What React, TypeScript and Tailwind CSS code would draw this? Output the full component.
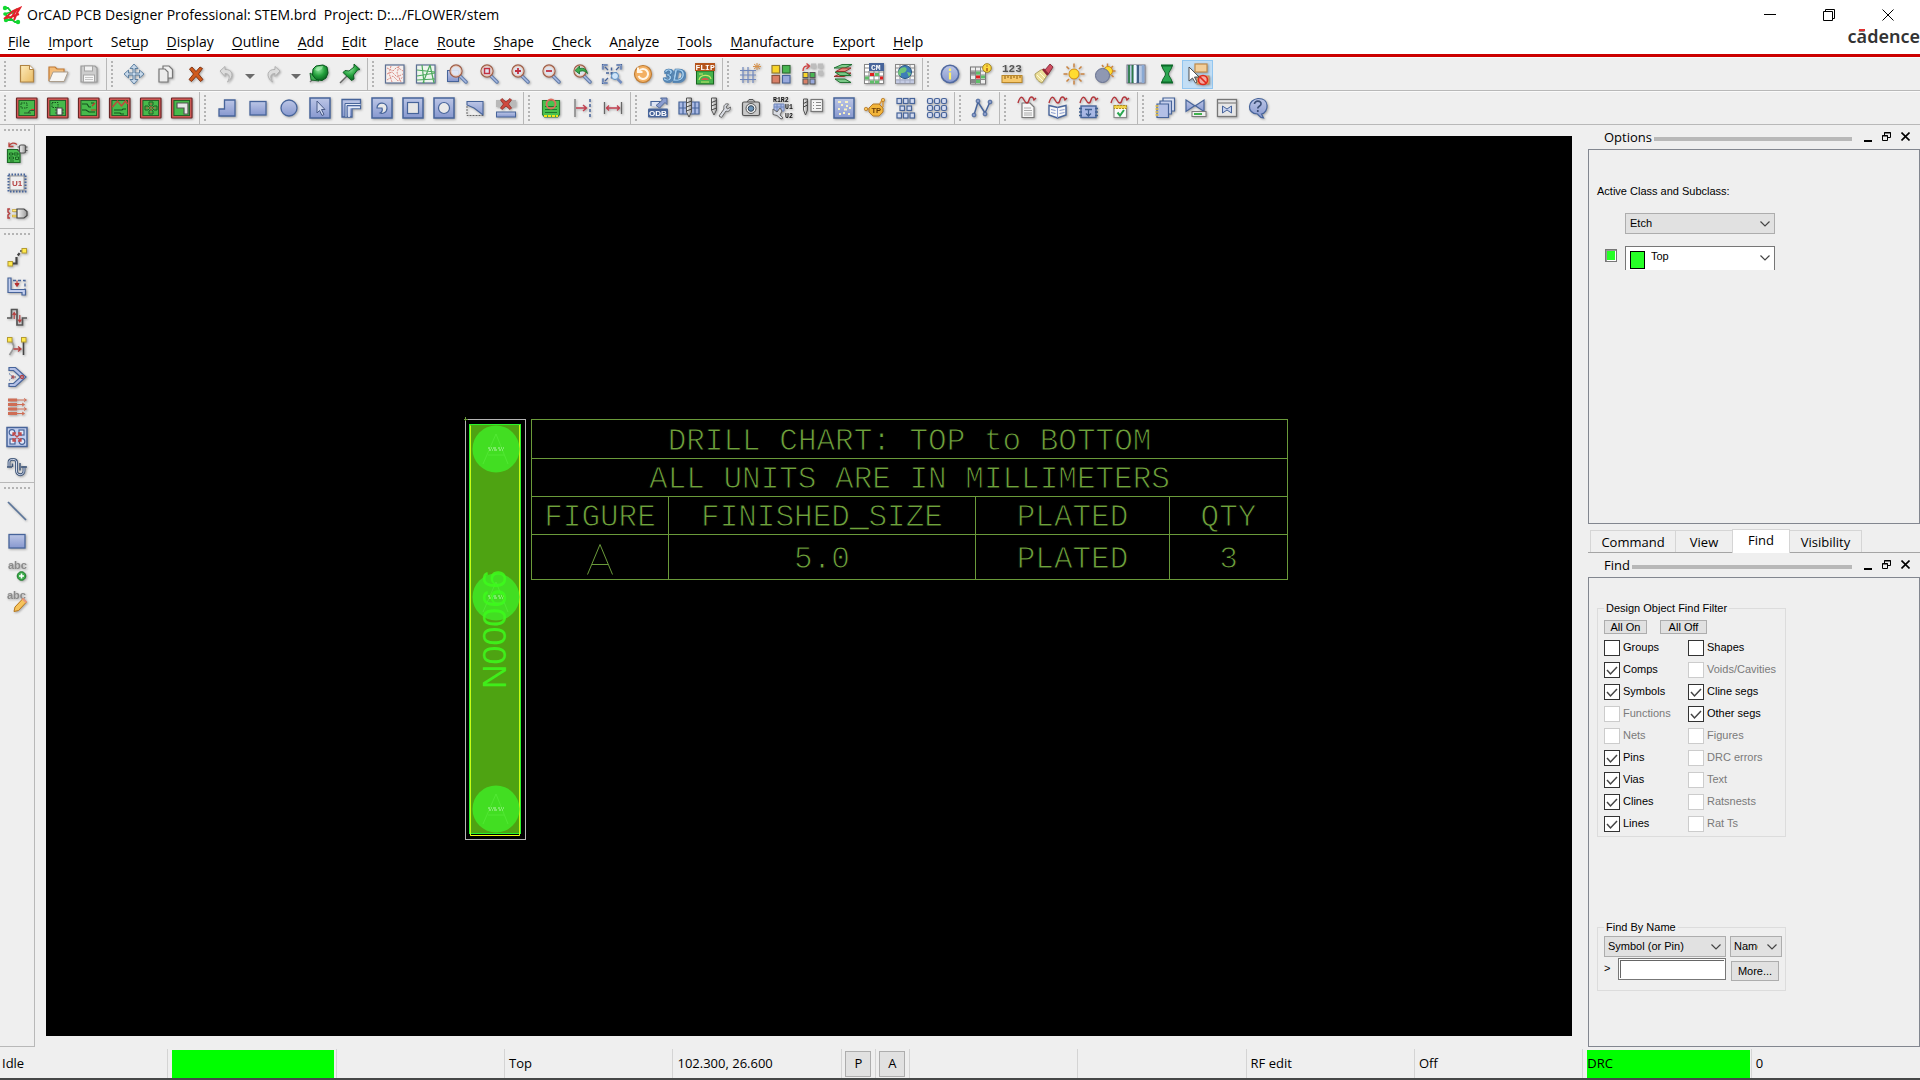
import React, { useState } from "react";

const B = "#47649a";

/* ---------- shared drawing parts ---------- */

function Svg({ children }: { children: React.ReactNode }) {
  return (
    <svg viewBox="0 0 24 24" className="h-6 w-6 drop-shadow-[1px_1px_1px_rgba(0,0,0,0.3)]" fill="none" aria-hidden="true">
      {children}
    </svg>
  );
}

function Defs() {
  return (
    <svg className="absolute h-0 w-0" aria-hidden="true">
      <defs>
        <linearGradient id="blue" x1="0" y1="0" x2="0" y2="1">
          <stop offset="0" stopColor="#bcc6e6" />
          <stop offset="1" stopColor="#8798cf" />
        </linearGradient>
        <linearGradient id="page" x1="0" y1="0" x2="1" y2="1">
          <stop offset="0" stopColor="#fdebbb" />
          <stop offset="1" stopColor="#e9bb62" />
        </linearGradient>
        <linearGradient id="steel" x1="0" y1="0" x2="1" y2="0">
          <stop offset="0" stopColor="#fafafa" />
          <stop offset="1" stopColor="#9a9a9a" />
        </linearGradient>
        <radialGradient id="gem" cx="0.4" cy="0.3" r="0.8">
          <stop offset="0" stopColor="#8fe89c" />
          <stop offset="0.5" stopColor="#23a03c" />
          <stop offset="1" stopColor="#04511a" />
        </radialGradient>
      </defs>
    </svg>
  );
}

const Lens = ({ children, square }: { children?: React.ReactNode; square?: boolean }) => (
  <Svg>
    {square && <rect x="2.500" y="8.500" width="11" height="11" fill="url(#blue)" stroke={B} />}
    <path d="M15 14l6 6" stroke="#5f7aa9" strokeWidth="3.500" strokeLinecap="round" />
    <path d="M15 14l6 6" stroke="#a9bbe2" strokeWidth="1.500" strokeLinecap="round" />
    <circle cx="11" cy="9" r="6" fill="#e3e9f5" fillOpacity="0.9" stroke="#a0604c" strokeWidth="1.300" />
    <circle cx="11" cy="9" r="5" stroke="#e9b99a" strokeWidth="0.800" />
    {children}
  </Svg>
);

const Board = ({ children }: { children: React.ReactNode }) => (
  <Svg>
    <rect x="1.500" y="2" width="20.500" height="20" rx="0.500" fill="#dd5a5a" stroke="#6b2626" strokeWidth="1.200" />
    <rect x="3.900" y="4.400" width="15.700" height="15.200" fill="#47ba4b" stroke="#1f5d25" />
    {children}
  </Svg>
);

const BlueBox = ({ children }: { children?: React.ReactNode }) => (
  <Svg>
    <rect x="2" y="2" width="20" height="20" fill="url(#blue)" stroke={B} strokeWidth="1.500" />
    {children}
  </Svg>
);

const Wave = () => <path d="M3 7c2-7 4-7 6-3s4 4 5 0 4-4 5 0l2-2" stroke="#b4343a" strokeWidth="1.400" />;

const I = {
  /* ---------- first toolbar ---------- */
  newFile: <Svg><path d="M5.500 3.500h9l4 4v12.500h-13z" fill="url(#page)" stroke="#b08443" strokeWidth="1.200" /><path d="M14.500 3.500v4h4" fill="#fff" stroke="#b08443" /></Svg>,
  open: <Svg><path d="M3 19V5h6l2 2h7v3" fill="#f3bd7a" stroke="#c27a34" strokeWidth="1.200" /><path d="M3 19.500l4-9.500h15l-4 9.500z" fill="#f6f5f3" stroke="#ab9d8c" /></Svg>,
  save: <Svg><path d="M4 4h14l2 2v14H4z" fill="#cdcdcd" stroke="#9a9a9a" strokeWidth="1.200" /><rect x="7.500" y="4" width="8" height="5" fill="#f2f2f2" stroke="#a5a5a5" /><rect x="6.500" y="13" width="11" height="7" fill="#f7f7f7" stroke="#a5a5a5" /><path d="M8 15.500h8M8 17.500h8" stroke="#c5c5c5" /></Svg>,
  move: <Svg><path d="M12 2l4 4.500h-3v4.500h4.500V8L22 12l-4.500 4v-3H13v4.500h3L12 22l-4-4.500h3V13H6.500v3L2 12l4.500-4v3H11V6.500H8z" fill="#c8d9ea" stroke="#54789c" strokeWidth="0.900" /></Svg>,
  copy: <Svg><path d="M10 4h6l3.500 3.500V16H10z" fill="#f0f0f0" stroke="#777" strokeWidth="1.200" /><path d="M6 7h6l3 3v10H6z" fill="#ebebeb" stroke="#777" strokeWidth="1.200" /></Svg>,
  del: <Svg><path d="M5.500 7l2.500-2 4 4.500L16 5l2.500 1.500-4 5.500 4.500 5.500-2.500 2-4.500-5-4.500 5-2.500-2 4.500-5.500z" fill="#cf5a1c" stroke="#7c2d0a" strokeWidth="0.900" /></Svg>,
  undo: <Svg><path d="M5 9l5-4.500V7.500c8-.5 9.500 7.500 2.500 12.500 3-5 2-8.500-2.500-8.500v3z" fill="#dcdcdc" stroke="#b0b0b0" /></Svg>,
  redo: <Svg><path d="M19 9l-5-4.500V7.500c-8-.5-9.500 7.500-2.500 12.500-3-5-2-8.500 2.500-8.500v3z" fill="#dcdcdc" stroke="#b0b0b0" /></Svg>,
  gem: <Svg><path d="M8 15l-5 5" stroke="#777" strokeWidth="1.500" /><path d="M3 11l1 7 8 1-2-4z" fill="#3fae53" stroke="#07561c" strokeWidth="0.800" /><path d="M6 7l3-3 7-1 4 2 1 6-2 5-4 2.500-6-1L5.500 13z" fill="url(#gem)" stroke="#07561c" /><path d="M8 8l2-3 6-1-1 3-4 2z" fill="#b5f2bd" opacity="0.600" /></Svg>,
  pin: <Svg><path d="M9 14l-7 7" stroke="#666" strokeWidth="1.500" /><path d="M16 2l6 5.500-2.500.5-4 5 .5 4-2.500 1.500L5 10.500 7 8.500l4 .5L16 5z" fill="url(#gem)" stroke="#07561c" strokeWidth="0.900" /></Svg>,
  gridRed: <Svg><rect x="2.500" y="3" width="18.500" height="18" fill="#f6efed" stroke="#5b6f93" strokeWidth="1.200" /><path d="M4 6l6 3 4-4 6 4M4 12l5-2 5 5 6-3M4 18l6-4 5 5 5-4M8 4l-2 7 3 9M16 4l-2 7 4 9" stroke="#d98880" strokeDasharray="2 1" /></Svg>,
  gridGreen: <Svg><rect x="2.500" y="3" width="18.500" height="18" fill="#edf4ed" stroke="#5b6f93" strokeWidth="1.200" /><path d="M3 8l18 2M3 14l18-3M3 18l18-1M8 3l2 18M16 3l-7 18M16 3l4 18" stroke="#4aa85b" strokeWidth="1.200" /></Svg>,
  zoomBy: <Lens square />,
  zoomFit: <Lens><rect x="8.500" y="6.500" width="5" height="5" stroke="#c23040" strokeWidth="1.500" /></Lens>,
  zoomIn: <Lens><path d="M11 6v6M8 9h6" stroke="#c23040" strokeWidth="1.800" /></Lens>,
  zoomOut: <Lens><path d="M8 9h6" stroke="#c23040" strokeWidth="1.800" /></Lens>,
  zoomPrev: <Lens><path d="M6 8.500l4.500-4.500v2.500c5-1 7 1 8 5-3-3-5-3-8-2V12z" fill="#3cae4c" stroke="#14672a" strokeWidth="0.800" /></Lens>,
  zoomWorld: <Svg><path d="M3 7.500V3h4.500M16.500 3H21v4.500M3 16.500V21h4.500" stroke={B} strokeWidth="2.200" /><path d="M3 7.500V3h4.500M16.500 3H21v4.500M3 16.500V21h4.500" stroke="#b9c8e6" strokeWidth="0.800" /><path d="M5 5l3 3M19 5l-3 3M5 19l3-3" stroke={B} strokeWidth="1.300" /><path d="M11.500 5.500v11M6 11h11" stroke={B} strokeWidth="1.500" strokeDasharray="3 1.500" /><circle cx="15" cy="14" r="3.500" fill="#cfe5fa" stroke="#5b8fc0" /><path d="M17.500 17l4 4" stroke="#6f8cc0" strokeWidth="2.500" /></Svg>,
  refresh: <Svg><circle cx="12" cy="12" r="8.500" fill="#f3b063" stroke="#bf7c34" strokeWidth="1.200" /><path d="M8 9a5 5 0 1 1-.5 5M7 5.500v4.500h4.500" stroke="#fff6e8" strokeWidth="2" /></Svg>,
  threeD: <Svg><text x="2" y="20" fontFamily="Liberation Sans" fontWeight="700" fontStyle="italic" fontSize="17" fill="#5b88b4" stroke="#5b88b4" strokeWidth="2">3D</text><text x="1" y="19" fontFamily="Liberation Sans" fontWeight="700" fontStyle="italic" fontSize="17" fill="#a5cdee" stroke="#3f75a6" strokeWidth="0.700">3D</text></Svg>,
  flip: <Svg><rect x="3.500" y="9" width="17" height="13" fill="#46b24c" stroke="#17661f" /><rect x="2" y="1" width="20" height="8" fill="#b5541b" /><text x="2.500" y="7.500" fontFamily="Liberation Mono" fontWeight="700" fontSize="8" fill="#fff">FLIP</text><path d="M6 18c1-6 11-6 12-1M8 20h8M6 12h4" stroke="#c6e86a" strokeWidth="1.200" /><path d="M8 18c2-3 6-3 8 0z" fill="#d65b4b" /></Svg>,
  gridSun: <Svg><path d="M2 8.500h16M2 13h16M2 17.500h16M5 5v16M10 5v16M15 8v13" stroke="#7088bd" strokeWidth="1.200" /><path d="M19 1v7M15 4.500h8M16 2l6 5M22 2l-6 5" stroke="#d9924b" /></Svg>,
  tiles: <Svg><g strokeWidth="1.100"><rect x="3" y="3.500" width="7.500" height="7.500" fill="#f8d52a" stroke="#927a30" /><rect x="13.500" y="3.500" width="7.500" height="7.500" fill="#49b652" stroke="#2d6b33" /><rect x="3" y="13.500" width="7.500" height="7.500" fill="#d98068" stroke="#86503f" /><rect x="13.500" y="13.500" width="7.500" height="7.500" fill="#98a9dc" stroke={B} /></g></Svg>,
  tilesMove: <Svg><path d="M11 1.500h5v5h-5zM18 1.500h5v5h-5zM18 8.500h5v5h-5z" fill="#bdbdbd" /><path d="M3 9c0-4 2-5.500 6-5M6.500 1.500l3 2.500-3 3" stroke="#cf4040" strokeWidth="1.400" /><g><rect x="3" y="10.500" width="5" height="5" fill="#f8d52a" stroke="#555" /><rect x="10" y="10.500" width="5" height="5" fill="#49b652" stroke="#555" /><rect x="3" y="17" width="5" height="5" fill="#d98068" stroke="#555" /><rect x="10" y="17" width="5" height="5" fill="#98a9dc" stroke="#555" /></g></Svg>,
  layers: <Svg><g strokeWidth="0.900"><path d="M4 17h10l6 3.500H9z" fill="#7ac886" stroke="#176b2a" /><path d="M3 14.500h10l7-3.500h-9z" fill="#e6867b" stroke="#8d2923" /><path d="M4 10h10l6 3.500H9z" fill="#78c786" stroke="#176b2a" /><path d="M3 6h11l7-3.500H11z" fill="#7fcd8d" stroke="#176b2a" /><path d="M5 9.500h9l6-3.500h-9z" fill="#e6867b" stroke="#8d2923" /></g></Svg>,
  cm: <Svg><rect x="2.500" y="2.500" width="19" height="19" fill="#fff" stroke="#888" /><rect x="7" y="1" width="15" height="8" fill={B} /><text x="9" y="7.500" fontFamily="Liberation Mono" fontWeight="700" fontSize="8" fill="#fff">CM</text><path d="M2.500 6H7M2.500 10h19M2.500 14h19M2.500 18h19M7 9v12M12 9v12M17 9v12" stroke="#888" /><path d="M8 11h4v3H8zM18 14.500h3v3h-3z" fill="#e02020" /><path d="M13 11h4v3h-4zM8 18.500h4v3H8zM3 14.500h4v3H3zM13 18.500h4v3h-4z" fill="#5fbe69" /></Svg>,
  world: <Svg><rect x="2.500" y="2.500" width="19" height="19" fill="#f4f4f4" stroke="#888" /><path d="M2.500 6h19M2.500 10h19M2.500 14h19M2.500 18h19M7 2.500v19M12 2.500v19M17 2.500v19" stroke="#888" /><path d="M3 17h18v4.500H3z" fill="#aeb8da" opacity="0.700" /><circle cx="12" cy="10" r="6.500" fill="#3f7db8" stroke="#275580" /><path d="M8 6c4-2 7 0 5 3s-5 1-5 3 0 3-2 1-.5-5 2-7zM14 10l4 1-2 4z" fill="#6fc57a" /></Svg>,
  info: <Svg><circle cx="12" cy="12" r="8.700" fill="url(#blue)" stroke="#5069a0" strokeWidth="1.500" /><path d="M12 6.500V9M12 10.500v7" stroke="#fff06a" strokeWidth="2.200" /></Svg>,
  infoTable: <Svg><rect x="1.500" y="5" width="15" height="17" fill="#eee" stroke="#777" /><path d="M1.500 9h15M1.500 13h15M1.500 17.500h15M6.500 5v17M11.500 5v17" stroke="#888" /><path d="M7 13.500h4v3H7z" fill="#e02020" /><path d="M7 9.500h4v3H7zM7 18h4v3H7zM12 13.500h4v3h-4z" fill="#5fbe69" /><path d="M2 9.500h4v3H2zM2 18h4v3H2z" fill="#888" /><circle cx="18" cy="6" r="4.300" fill="#fbd83f" stroke="#a6841d" /><path d="M18 3.500v1M18 6v3" stroke="#a34a0d" strokeWidth="1.300" /></Svg>,
  measure: <Svg><text x="2" y="10" fontFamily="Liberation Mono" fontSize="11" fill="#555" fontWeight="700">123</text><rect x="2" y="13.500" width="20" height="7" fill="#f6c86b" stroke="#b8862a" /><path d="M5 14v3M8 14v2M11 14v3M14 14v2M17 14v3M20 14v2" stroke="#8c5c0c" /></Svg>,
  brush: <Svg><path d="M14 8l5-6 3 3-4.500 7z" fill="#cf4d60" stroke="#7c1d2c" strokeWidth="0.800" /><path d="M9 8.500c4-3 8 1 7 5l-5 7.500C6 19 4 15 4 12z" fill="#ecdf9a" stroke="#a0904a" strokeWidth="0.800" /><path d="M6 13l6 6M9 11l5 5" stroke="#fffbd9" /><path d="M12 7l5 6" stroke="#8c2134" strokeWidth="2.500" /></Svg>,
  sun: <Svg><path d="M12 1.500v4M12 18.500v4M1.500 12h4M18.500 12h4M4.500 4.500l2.500 2.500M17 17l2.500 2.500M19.500 4.500L17 7M4.500 19.500L7 17" stroke="#c98340" strokeWidth="1.500" /><circle cx="12" cy="12" r="5" fill="#ffdc30" stroke="#d08a13" /></Svg>,
  moon: <Svg><path d="M14.500 1.500v3M22.500 9h-3M9 3l1.500 2M20 4l-2 2M20.500 15l-2-2" stroke="#c98340" strokeWidth="1.500" /><circle cx="15" cy="9" r="4.500" fill="#ffdc30" stroke="#d08a13" /><circle cx="9.500" cy="13.500" r="7" fill="#8f98b2" stroke="#667090" /></Svg>,
  shade: <Svg><rect x="3" y="3" width="18" height="18" fill="#b9c9e3" stroke="#778" /><path d="M5 3v18M8.500 3v18" stroke="#2b7a48" strokeWidth="1.800" /><path d="M11 3v18" stroke="#f0f8ff" strokeWidth="2" /><path d="M14 3v18" stroke="#3f5f85" strokeWidth="2" /><path d="M19 3v18" stroke="#8aa9d3" strokeWidth="2.500" /></Svg>,
  hourglass: <Svg><path d="M7 3.500h10c0 4-3.500 6-3.500 8.500s3.500 4.500 3.500 8.500H7c0-4 3.500-6 3.500-8.500S7 7.500 7 3.500z" fill="#2aa650" stroke="#0b5b22" strokeWidth="0.900" /><path d="M6 3.500h12M6 20.500h12" stroke="#0b6b28" strokeWidth="2" /></Svg>,
  noSelect: <Svg><rect x="9" y="2" width="12" height="8" fill="#f3cf9a" stroke="#c08a4a" strokeWidth="1.200" /><rect x="11" y="14" width="12" height="8" fill="#e9a27d" stroke="#c08a4a" /><circle cx="17" cy="18" r="4.500" fill="#f3a9a0" stroke="#e02a1c" strokeWidth="1.700" /><path d="M14 15l6 6" stroke="#e02a1c" strokeWidth="1.700" /><path d="M3 5v14l3.500-3 3 5 1.500-1-2.500-5H13z" fill="#fff" stroke="#444" strokeWidth="0.900" /></Svg>,

  /* ---------- second toolbar ---------- */
  b1: <Board><path d="M6 7h6v5H6z" stroke="#14501c" strokeDasharray="1.500 1" /><path d="M9 17h4l2-2.500h4M13 17h3" stroke="#2a5c2e" strokeWidth="1.200" /><path d="M16 13.500h3" stroke="#d33" /></Board>,
  b2: <Board><path d="M6 6.500h6v5H6z" stroke="#14501c" strokeDasharray="1.500 1" /><rect x="11" y="12" width="5" height="7" fill="#f2f2f2" stroke="#444" /><path d="M9 14h2M9 17h2M16 14h2M16 17h2" stroke="#444" strokeWidth="1.200" /></Board>,
  b3: <Board><path d="M5 8h5l2 3h2M5 14h4l3 2h6M14 7h3" stroke="#14501c" strokeWidth="1.200" /><path d="M15 10l3-3M14 14h5" stroke="#c8372a" strokeWidth="1.200" /></Board>,
  b4: <Board><path d="M4.500 11l5-6 4 5 4-5 2 3" stroke="#c8423a" strokeWidth="1.400" /><path d="M6 14h8l1-1h3M6 17h6l1 1h3" stroke="#14501c" strokeWidth="1.200" /></Board>,
  b5: <Board><path d="M10 6h4v3l-2 1.500L10 9zM10 18h4v-3l-2-1.500L10 15zM6 10h3l2 2-2 2H6zM18 10h-3l-2 2 2 2h3z" stroke="#1f5d25" /><path d="M12 7v10M7 12h10" stroke="#c0493b" strokeDasharray="2 1" /></Board>,
  b6: <Board><path d="M7 7h11v11h-4v-6H7z" fill="#e6e6e6" stroke="#555" strokeWidth="1.200" /></Board>,
  poly: <Svg><path d="M4 20v-7h5.500V4H20v16z" fill="url(#blue)" stroke={B} strokeWidth="1.300" /></Svg>,
  rect: <Svg><rect x="4" y="5.500" width="16" height="13.500" fill="url(#blue)" stroke={B} strokeWidth="1.300" /></Svg>,
  circ: <Svg><circle cx="12" cy="12" r="8" fill="url(#blue)" stroke={B} strokeWidth="1.300" /></Svg>,
  sel: <BlueBox><path d="M9 5v12l2.500-2.500 2.500 5 2-1-2.500-5H17z" fill="#cdd6ee" stroke="#4a5c88" /></BlueBox>,
  track: <Svg><path d="M3 3.500h18.500v9H13v8.500H3z" fill="url(#blue)" stroke={B} strokeWidth="1.300" /><path d="M7 21V8.500h14.500M10 21v-9.500h11" stroke="#e3e9f6" strokeWidth="1.600" /><path d="M8 21V9.500h13M6 21V7.500h15.500" stroke={B} /></Svg>,
  cut: <BlueBox><path d="M12 12H7c0-7 10-6 10 0 0 5-5 6-7 5 2-1 3-2 2-5z" fill="#e9e9e9" stroke={B} strokeWidth="1.200" /></BlueBox>,
  hole: <BlueBox><rect x="6.500" y="6.500" width="11" height="11" fill="#e6e6e6" stroke={B} strokeWidth="1.200" /></BlueBox>,
  ring: <BlueBox><circle cx="12" cy="12" r="5.500" fill="#e9e9e9" stroke={B} strokeWidth="1.200" /></BlueBox>,
  tri: <Svg><path d="M4 5.500h16V19L11 12 4 9z" fill="url(#blue)" stroke={B} strokeWidth="1.100" /><path d="M4 10v9.500h16" stroke="#666" strokeDasharray="2 1" /></Svg>,
  xbar: <Svg><rect x="2" y="4" width="20" height="7" fill="#b9b9b9" /><path d="M8 2.500l4 3.500 4-3.500 1.500 1.500L14.500 8l3 4-1.500 1.500-4-3.500-4 3.500L6.500 12l3-4-3-4z" fill="#cf4a3f" stroke="#8b2923" strokeWidth="0.800" /><rect x="2.500" y="16" width="19" height="5" fill="url(#blue)" stroke={B} /></Svg>,
  drc: <Svg><path d="M3.500 4.500h17v14l-2 2.500h-13l-2-2.500z" fill="#4ac24f" stroke="#2c7a33" strokeWidth="1.100" /><path d="M6 10.500h12M6 13.500h12M6 16.500h12" stroke="#1c7a2b" /><path d="M5 20h14" stroke="#f2e21b" strokeWidth="2" strokeDasharray="3 1" /><circle cx="12" cy="8" r="4.500" stroke="#dd6b5d" strokeWidth="1.800" /></Svg>,
  dimR: <Svg><path d="M5 3v18" stroke="#777" strokeWidth="1.300" /><path d="M20 3v18" stroke={B} strokeDasharray="3 2" strokeWidth="1.500" /><path d="M6 12h10M13 9l3.500 3-3.500 3" stroke="#c24050" strokeWidth="1.400" /></Svg>,
  dimB: <Svg><path d="M3.500 6v12M20.500 6v12" stroke="#666" strokeWidth="1.300" /><path d="M5 12h14M8 9.500L5.500 12 8 14.500M16 9.500l2.500 2.500-2.500 2.500" stroke="#c24050" strokeWidth="1.300" /></Svg>,
  odb: <Svg><path d="M5 10V5.500h9v6" fill="#dfe5f4" stroke={B} strokeWidth="1.200" /><path d="M10 9.500l6.500-5.500-2-2H21v6.500l-2-2-5.500 5.500z" fill="#8b9dcf" stroke="#4a6393" strokeWidth="0.900" /><rect x="2" y="12.500" width="20" height="9" rx="1" fill={B} /><text x="3" y="20" fontFamily="Liberation Sans" fontWeight="700" fontSize="8" fill="#fff">ODB</text></Svg>,
  drillGrid: <Svg><path d="M2 6h20v12H2zM2 12h20M6 6v12M18 6v12" fill="#a9b9e4" stroke={B} strokeWidth="1.200" /><path d="M9.500 2h5v14L12 21l-2.500-5z" fill="url(#steel)" stroke="#555" /><path d="M9.500 7l5-2M9.500 11l5-2M9.500 15l5-2" stroke="#444" /></Svg>,
  drillWrench: <Svg><path d="M3.500 2h5v12L6 19l-2.500-5z" fill="url(#steel)" stroke="#555" /><path d="M3.500 6.500l5-2M3.500 10l5-2M3.500 14l5-2" stroke="#444" /><path d="M11 20l5-7c-1-4 2-6 4.500-5L18 11l1.500 2 3-2c0 4-2.500 5-4.500 4l-4.500 6.500z" fill="#d9dce3" stroke="#666" /></Svg>,
  camera: <Svg><path d="M8 6l2-2.500h4L16 6" fill="#bbb" stroke="#555" /><rect x="3.500" y="6" width="17" height="13.500" rx="1.500" fill="#c9c9c9" stroke="#555" strokeWidth="1.200" /><circle cx="12" cy="12.500" r="5" fill="#eee" stroke="#555" /><circle cx="12" cy="12.500" r="2.800" fill="#6a93b9" stroke="#345" /></Svg>,
  rename: <Svg><text x="3" y="6" fontFamily="Liberation Mono" fontWeight="700" fontSize="6.500" fill="#111">R1R2</text><text x="15" y="13" fontFamily="Liberation Mono" fontWeight="700" fontSize="6.500" fill="#111">U1</text><text x="15" y="22" fontFamily="Liberation Mono" fontWeight="700" fontSize="6.500" fill="#111">U2</text><path d="M4 8h10v7H4zM4 11h10M7 8v7M11 8v7" fill="#a9b8e4" stroke="#7088bd" /><path d="M3 13l4 3 3-4 2 3-2 4 3 3-2 1-4-3.500-4-1z" fill="#d9dce3" stroke="#666" /></Svg>,
  drillDoc: <Svg><path d="M2.500 3h4v11l-2 5-2-5z" fill="url(#steel)" stroke="#555" /><path d="M2.500 7.500l4-2M2.500 11l4-2" stroke="#444" /><rect x="10" y="3.500" width="11.500" height="12" fill="#f5f5f5" stroke="#777" strokeWidth="1.200" /><path d="M12 6.500h1M12 9.500h1M12 12.500h1M15 6.500h5M15 9.500h5M15 12.500h5" stroke="#888" /></Svg>,
  dots: <BlueBox><path d="M6 6h3M13 6h3M9 9h2M14 10h2M6 13h2M12 13.500h3M17 12h2M7 18h2M11 17h2M16 18h2" stroke="#f7f1c3" strokeWidth="1.800" /></BlueBox>,
  tp: <Svg><path d="M2 13h5M16 9l4-6M20 4v7" stroke="#dd9a3a" strokeWidth="1.500" /><circle cx="20" cy="4" r="1.700" fill="#f7c35b" stroke="#b57a2b" strokeWidth="0.800" /><circle cx="3" cy="13" r="1.700" fill="#f7c35b" stroke="#b57a2b" strokeWidth="0.800" /><path d="M10 8h6l4 4v4l-4 4h-6l-4-4v-4z" fill="#f2b53a" stroke="#b57a2b" /><text x="8.500" y="17" fontFamily="Liberation Sans" fontWeight="700" fontSize="7.500" fill="#6c3d05">TP</text></Svg>,
  pads: <Svg><g fill="#d3dbf0" stroke={B} strokeWidth="1.200">{[3, 9.5, 16].map((x) => <rect key={x} x={x} y="2.500" width="4.500" height="5" />)}{[6, 13].map((x) => <rect key={x} x={x} y="10" width="4.500" height="4.500" />)}{[3, 9.5, 16].map((x) => <rect key={x} x={x} y="17" width="4.500" height="5" />)}</g></Svg>,
  padGrid: <Svg><g fill="#d3dbf0" stroke={B} strokeWidth="1.200">{[5, 12, 19].map((x) => [5, 12, 19].map((y) => <rect key={x + "-" + y} x={x - 2.5} y={y - 2.5} width="5" height="5" rx="1.500" />))}</g></Svg>,
  net: <Svg><path d="M4 19L8 6l7 11 5-11" stroke={B} strokeWidth="1.500" /><g fill="#8a9cc9" stroke={B} strokeWidth="0.900"><circle cx="4" cy="19" r="1.900" /><circle cx="8" cy="5" r="1.900" /><circle cx="15" cy="18" r="1.900" /><circle cx="20" cy="6" r="1.900" /></g></Svg>,
  repDoc: <Svg><path d="M7 7h8l4 4v10.500H7z" fill="#f7f7f7" stroke="#777" strokeWidth="1.100" /><path d="M9 12h7M9 14.500h8M9 17h8M9 19h8" stroke="#aaa" /><Wave /></Svg>,
  repBook: <Svg><path d="M3 9.500l8.500 2 8.500-2V19l-8.500 3L3 19z" fill="#f7f7f7" stroke={B} strokeWidth="1.400" /><path d="M11.500 11.500V22M13.500 14.500l5-1M13.500 17.500l5-1M5 13.500l4.500 1M5 16.500l4.500 1" stroke="#8b9dcf" /><Wave /></Svg>,
  repChip: <Svg><rect x="4" y="10" width="15" height="11.500" fill="#a9b8e4" stroke={B} strokeWidth="1.400" /><path d="M2 12.500h3M2 16h3M2 19.500h3M18 12.500h3M18 16h3M18 19.500h3M8 13.500h7M11.500 13.500v6M9 17.500l2.500 2.500 2.500-2.500" stroke="#3f5f90" strokeWidth="1.300" /><Wave /></Svg>,
  repCheck: <Svg><rect x="6" y="9.500" width="12.500" height="12" fill="#fafafa" stroke="#888" strokeWidth="1.100" /><path d="M6 9.500h12.500v3H6z" fill="#f2d44a" stroke="#b5901b" strokeDasharray="2 1" /><path d="M9.500 16.500l2.500 3 4-5.500" stroke="#2aa750" strokeWidth="2" /><Wave /></Svg>,
  docs: <Svg><path d="M10 2h11.500v13H10z" fill="#dfe5f4" stroke={B} strokeWidth="1.200" /><path d="M7 5h11.500v13H7z" fill="#c3cdea" stroke={B} strokeWidth="1.200" /><path d="M4 8h11.500v13.500H4z" fill="#b3c0e6" stroke={B} strokeWidth="1.200" /><path d="M2.500 10h3M2.500 13h3M2.500 16h3M2.500 19h3" stroke="#e8bf3a" strokeWidth="1.600" /></Svg>,
  valve: <Svg><path d="M2 4l9 6 9-6v11.500l-9-6-9 6z" fill="url(#blue)" stroke={B} strokeWidth="1.200" /><rect x="8" y="15.500" width="14" height="5" fill="#eee" stroke="#777" /><path d="M10 18h8" stroke="#3fb14d" strokeWidth="2" /></Svg>,
  valveBox: <Svg><rect x="2.500" y="3.500" width="19" height="17" fill="#e6e6e6" stroke="#777" strokeWidth="1.300" /><path d="M2.500 7h19" stroke="#888" strokeWidth="1.300" /><path d="M7.500 10l4.500 3 4.500-3v7L12 14l-4.500 3z" fill="#c6d2f0" stroke={B} /></Svg>,
  help: <Svg><path d="M12 2.500c12-.5 11 14 3.500 15.500l2 4c-4-.5-5-3-6-4C0 17.500 1.500 3.500 12 2.500z" fill="url(#blue)" stroke={B} strokeWidth="1.200" /><path d="M8.500 8c0-4 7-3.500 6.500 0 0 2.500-3.500 2-3.200 4.500M11.800 14v2" stroke="#3b4f76" strokeWidth="1.700" /></Svg>,

  /* ---------- left toolbar ---------- */
  place: <Svg><path d="M2.500 8.500h10l2.500 2.500v10.500H2.500z" fill="#49bb50" stroke="#1d6a27" strokeWidth="1.200" /><path d="M4.500 12h3v2h-3zM9 12h4v2H9zM4.500 16h4v2h-4zM10.500 16h3v2.500h-3zM5 20h4" stroke="#0f5018" strokeWidth="0.800" /><path d="M4 5c2-3.500 5-3.500 8-1.500M4 1.500v4h4.500" stroke="#b8423c" strokeWidth="1.300" /><rect x="14.500" y="4" width="6" height="8" rx="1.500" fill="url(#steel)" stroke="#555" strokeWidth="1.200" /><path d="M12.500 6h2M12.500 9.500h2M20.500 6h2M20.500 9.500h2" stroke="#555" /></Svg>,
  u1: <Svg><rect x="5" y="5" width="14" height="14" fill="#eee" stroke="#999" /><rect x="3.500" y="3.500" width="17" height="17" stroke={B} strokeWidth="2" strokeDasharray="1.500 1.500" /><text x="7" y="15" fontFamily="Liberation Sans" fontWeight="700" fontSize="8" fill="#b54040">U1</text></Svg>,
  plug: <Svg><path d="M5 8H3v3l1.500 1.500L3 14v3h2" stroke="#b54040" strokeWidth="1.500" /><path d="M7 9.500h6M7 15h6" stroke="#c8a535" strokeWidth="2.500" /><path d="M7.500 9.500h5M7.500 15h5" stroke="#ffe97a" /><path d="M12 8h7l3 2.500v4L19 17h-7z" fill="url(#steel)" stroke="#444" strokeWidth="1.200" /></Svg>,
  route: <Svg><path d="M6 18.500h5.500V12l4-5" stroke="#444" strokeWidth="2.200" strokeDasharray="12 2 3 2" /><path d="M15 6h4" stroke="#444" strokeDasharray="2 1" strokeWidth="1.500" /><rect x="3" y="16.500" width="4.500" height="4.500" fill="#ffe94c" stroke="#b59c32" /><rect x="17" y="3.500" width="4.500" height="4.500" fill="#ffe94c" stroke="#b59c32" /></Svg>,
  slide: <Svg><path d="M8 5.500h12V17" stroke={B} strokeDasharray="3 2" strokeWidth="1.300" /><path d="M3 3h3v11.500h14.500V20H17v-2.500H3z" fill="#c3cfee" stroke={B} strokeWidth="1.200" /><path d="M12 5.500V9M10 8.500l2 3 2-3z" fill="#b53030" stroke="#b53030" /></Svg>,
  delay: <Svg><path d="M2 13h4.500V4.500H12V20h5.500v-7H22" stroke="#555" strokeWidth="1.700" /><path d="M9.200 14V8M7.500 10l1.700-2.500L11 10M14.800 10v6M13 14.500l1.800 2.500 1.700-2.500" stroke="#b54040" strokeWidth="1.200" /></Svg>,
  tune: <Svg><path d="M5 5c4.500 4 4.500 8 2 11l-2.500 4" stroke="#999" strokeWidth="1.700" /><path d="M18.500 5v15" stroke="#444" strokeWidth="1.600" /><path d="M8.500 14H15M13 11.500l3 2.500-3 2.500" stroke="#b54040" strokeWidth="1.300" /><rect x="2.500" y="2.500" width="4.500" height="4.500" fill="#ffe94c" stroke="#b59c32" /><rect x="16.500" y="2.500" width="4.500" height="4.500" fill="#ffe94c" stroke="#b59c32" /></Svg>,
  mitre: <Svg><path d="M4 2.500h6.500L21 12 10.500 21.500H4v-3h4.500l7-6.500-7-6.500H4z" fill="#b3c0e6" stroke={B} strokeWidth="1.200" /><path d="M4 8.500l4 3.500-4 3.500M7 12h4" stroke={B} strokeDasharray="2 1" /><circle cx="8" cy="12" r="1.200" stroke="#b54040" /><circle cx="17" cy="12" r="1.500" stroke="#b54040" strokeWidth="1.300" /></Svg>,
  fan: <Svg><path d="M3 5h9M3 9.500h9M3 14h9M3 18.500h9" stroke="#cf6d55" strokeWidth="3" /><path d="M12 5h9M12 9.500h7M12 14h9M12 18.500h7M19 3.500l2.500 1.500L19 6.500M17 8l2.500 1.500L17 11M19 12.500l2.500 1.500-2.500 1.500M17 17l2.500 1.500L17 20" stroke="#cf6d55" /></Svg>,
  spread: <Svg><rect x="2" y="2.500" width="20" height="19" fill="#c3cfee" stroke={B} strokeWidth="1.500" /><g stroke={B} strokeWidth="1.200" fill="#e4eafa"><circle cx="7" cy="7.500" r="2.800" /><circle cx="17" cy="16.500" r="2.800" /><rect x="14" y="5" width="5" height="5" /><rect x="5" y="14" width="5" height="5" /></g><path d="M8 8l8 8M16 8l-8 8M8 11V8h3M13 8h3v3M8 13v3h3M13 16h3v-3" stroke="#c24a4a" strokeWidth="1.300" /></Svg>,
  meander: <Svg><path d="M4 12V7c0-3.500 7.500-3.500 7.500 0v9c0 5 7.500 5 7.500 0v-5" stroke="#3f5678" strokeWidth="2.800" /><path d="M4 12V7c0-3.500 7.500-3.500 7.500 0v9c0 5 7.500 5 7.500 0v-5" stroke="#e4eafa" strokeWidth="0.900" /><path d="M7.500 12V8.500M15 8v7.500M2 12h5M16 12h6" stroke="#3f5678" strokeWidth="1.500" /></Svg>,
  line: <Svg><path d="M3 3l18 18" stroke="#5b759a" strokeWidth="1.700" /></Svg>,
  textAdd: <Svg><text x="3" y="10" fontFamily="Liberation Sans" fontSize="11" fontWeight="700" fill="#8a8a8a">abc</text><circle cx="16.500" cy="17" r="4.300" fill="#3aac4a" stroke="#1f7a2c" /><path d="M16.500 14.500v5M14 17h5" stroke="#fff" strokeWidth="1.600" /></Svg>,
  textEdit: <Svg><text x="2" y="10" fontFamily="Liberation Sans" fontSize="11" fontWeight="700" fill="#8a8a8a">abc</text><path d="M10 18l8-8.500 3.500 3.500-8 8.500-4.500 1z" fill="#f6c35b" stroke="#b5761b" /><path d="M17.500 9.500l4 4" stroke="#e9967d" strokeWidth="2" /></Svg>,
};

type Name = keyof typeof I;
type Item = Name | "caret";

const rowOne: Item[][] = [
  ["newFile", "open", "save"],
  ["move", "copy", "del", "undo", "caret", "redo", "caret", "gem", "pin"],
  ["gridRed", "gridGreen", "zoomBy", "zoomFit", "zoomIn", "zoomOut", "zoomPrev", "zoomWorld", "refresh", "threeD", "flip"],
  ["gridSun", "tiles", "tilesMove", "layers", "cm", "world"],
  ["info", "infoTable", "measure", "brush", "sun", "moon", "shade", "hourglass", "noSelect"],
];
const rowTwo: Item[][] = [
  ["b1", "b2", "b3", "b4", "b5", "b6"],
  ["poly", "rect", "circ", "sel", "track", "cut", "hole", "ring", "tri", "xbar"],
  ["drc", "dimR", "dimB"],
  ["odb", "drillGrid", "drillWrench", "camera", "rename", "drillDoc", "dots", "tp", "pads", "padGrid"],
  ["net"],
  ["repDoc", "repBook", "repChip", "repCheck"],
  ["docs", "valve", "valveBox", "help"],
];
const leftBar: Name[][] = [
  ["place", "u1", "plug"],
  ["route", "slide", "delay", "tune", "mitre", "fan", "spread", "meander"],
  ["line", "rect", "textAdd", "textEdit"],
];

function ToolRow({ groups }: { groups: Item[][] }) {
  return (
    <div className="flex h-[34px] shrink-0 border-b border-[#b8b8b8] border-t border-t-[#fafafa]">
      {groups.map((g, gi) => (
        <div key={gi} className={"flex items-center pr-0.5 " + (gi < groups.length - 1 ? "border-r border-[#b8b8b8]" : "")}>
          <div className="ml-1 mr-1 h-[26px] w-[3px] border-l-2 border-dotted border-[#b4b4b4]" />
          {g.map((n, i) =>
            n === "caret" ? (
              <button key={i} aria-label="History" className="flex h-8 w-[15px] items-center justify-center pt-1">
                <span className="border-x-5 border-t-5 border-x-transparent border-t-[#6b6b6b]" />
              </button>
            ) : (
              <button
                key={i}
                aria-label={n}
                className={"flex h-[29px] w-[31px] items-center justify-center " + (n === "noSelect" ? "border border-[#92c6f0] bg-[#c2def5]" : "")}
              >
                {I[n]}
              </button>
            )
          )}
        </div>
      ))}
    </div>
  );
}

/* ---------- menu ---------- */

const menus: [string, string, string][] = [
  ["", "F", "ile"], ["", "I", "mport"], ["Set", "u", "p"], ["", "D", "isplay"], ["", "O", "utline"], ["", "A", "dd"],
  ["", "E", "dit"], ["", "P", "lace"], ["", "R", "oute"], ["", "S", "hape"], ["", "C", "heck"], ["A", "n", "alyze"],
  ["", "T", "ools"], ["", "M", "anufacture"], ["E", "x", "port"], ["", "H", "elp"],
];

/* ---------- right docks ---------- */

function DockTitle({ title }: { title: string }) {
  return (
    <div className="flex h-6 items-center pb-px pl-4 pr-2.5">
      <h2 className="text-[13px] leading-4">{title}</h2>
      <div className="ml-0.5 mr-3 mt-1 h-1 flex-1 bg-[#b8b8b8]" />
      <div className="flex items-center gap-2.5">
        <button aria-label="Minimize" className="flex h-3 w-2 items-end pb-px"><span className="h-0.5 w-full bg-black" /></button>
        <button aria-label="Float">
          <svg viewBox="0 0 9 9" className="h-[9px] w-[9px]" fill="none" stroke="#000">
            <path d="M2.500 3V.5h6v5H6M2 1h7M.5 3.500h5v5h-5zM0 4h6" />
          </svg>
        </button>
        <button aria-label="Close">
          <svg viewBox="0 0 9 9" className="h-[9px] w-[9px]" stroke="#000" strokeWidth="1.600"><path d="M.5.5l8 8M8.500.5l-8 8" /></svg>
        </button>
      </div>
    </div>
  );
}

function Chevron() {
  return (
    <svg viewBox="0 0 10 6" className="pointer-events-none absolute right-[5px] top-1/2 h-1.5 w-2.5 -translate-y-1/2" fill="none" stroke="#444" strokeWidth="1.200">
      <path d="M.5.5L5 5 9.500.5" />
    </svg>
  );
}

function Check({ label, checked, disabled }: { label: string; checked?: boolean; disabled?: boolean }) {
  const [on, setOn] = useState(!!checked);
  return (
    <label className={"relative flex h-[22px] items-start gap-[3px] leading-4 " + (disabled ? "text-[#7a7a7a]" : "")}>
      <input
        type="checkbox"
        checked={on}
        disabled={disabled}
        onChange={() => setOn(!on)}
        className="h-4 w-4 shrink-0 appearance-none border border-[#333] bg-white disabled:border-[#ccc]"
      />
      {on && (
        <svg viewBox="0 0 16 16" className="pointer-events-none absolute left-0 top-0 h-4 w-4" fill="none" stroke="#444" strokeWidth="1.500">
          <path d="M3 8l3.500 4L13 5" />
        </svg>
      )}
      <span className="-mt-px">{label}</span>
    </label>
  );
}

const colA: [string, boolean, boolean][] = [
  ["Groups", false, false], ["Comps", true, false], ["Symbols", true, false], ["Functions", false, true], ["Nets", false, true],
  ["Pins", true, false], ["Vias", true, false], ["Clines", true, false], ["Lines", true, false],
];
const colB: [string, boolean, boolean][] = [
  ["Shapes", false, false], ["Voids/Cavities", false, true], ["Cline segs", true, false], ["Other segs", true, false], ["Figures", false, true],
  ["DRC errors", false, true], ["Text", false, true], ["Ratsnests", false, true], ["Rat Ts", false, true],
];

const small = "font-['Liberation_Sans',sans-serif] text-[11px]";

function Docks() {
  return (
    <aside className="flex w-[332px] shrink-0 flex-col">
      <DockTitle title="Options" />
      <section className={"h-[375px] border border-[#82868f] px-2 pt-[33px] " + small}>
        <p className="leading-4">Active Class and Subclass:</p>
        <div className="relative ml-7 mt-3.5 w-[150px]">
          <select aria-label="Active class" className="block h-[21px] w-full appearance-none border border-[#adadad] bg-[#e1e1e1] pl-1">
            <option>Etch</option>
          </select>
          <Chevron />
        </div>
        <div className="mt-3 flex items-start">
          <button aria-label="Layer visibility" className="ml-2 mr-2 mt-[3px] h-[13px] w-3 border border-[#777] bg-[#26ff26] shadow-[inset_1px_1px_0_#999,inset_-1px_-1px_0_#fff]" />
          <div className="relative w-[150px]">
            <select aria-label="Active subclass" className="block h-6 w-full appearance-none border border-b-0 border-[#777] bg-white pb-1 pl-[25px]">
              <option>Top</option>
            </select>
            <span className="pointer-events-none absolute left-[5px] top-[5px] h-[18px] w-[15px] border border-black bg-[#26ff26]" />
            <Chevron />
          </div>
        </div>
      </section>
      <div role="tablist" className="mt-[5px] flex h-6 items-end border-b border-[#a5a5a5] pl-0.5 text-[13px]">
        <button role="tab" className="h-[22px] w-[86px] border border-b-0 border-[#d5d5d5] leading-5">Command</button>
        <button role="tab" className="h-[22px] w-14 border-t border-[#d5d5d5] leading-5">View</button>
        <button role="tab" aria-selected="true" className="-mb-px h-6 w-[58px] border border-b-0 border-[#d5d5d5] bg-white pb-1 leading-5">Find</button>
        <button role="tab" className="h-[22px] w-[72px] border border-b-0 border-l-0 border-[#d5d5d5] leading-5">Visibility</button>
      </div>
      <DockTitle title="Find" />
      <section className={"flex-1 border border-[#82868f] px-2 pt-[22px] " + small}>
        <fieldset className="h-[237px] w-[189px] border border-[#dcdcdc] pl-1.5">
          <legend className="px-0.5 leading-4">Design Object Find Filter</legend>
          <div className="mb-1.5 mt-1 flex gap-[13px]">
            <button className="h-3.5 w-[43px] border border-[#adadad] bg-[#e1e1e1] leading-3">All On</button>
            <button className="h-3.5 w-[47px] border border-[#adadad] bg-[#e1e1e1] leading-3">All Off</button>
          </div>
          <div className="flex">
            <div className="w-[84px]">
              {colA.map(([l, c, d]) => <Check key={l} label={l} checked={c} disabled={d} />)}
            </div>
            <div>
              {colB.map(([l, c, d]) => <Check key={l} label={l} checked={c} disabled={d} />)}
            </div>
          </div>
        </fieldset>
        <fieldset className="mt-[82px] h-[72px] w-[189px] border border-[#dcdcdc] pl-1.5">
          <legend className="px-0.5 leading-4">Find By Name</legend>
          <div className="mt-px flex gap-1">
            <div className="relative w-[122px]">
              <select aria-label="Find by" className="block h-[21px] w-full appearance-none border border-[#adadad] bg-[#e1e1e1] pl-[3px]">
                <option>Symbol (or Pin)</option>
              </select>
              <Chevron />
            </div>
            <div className="relative w-[52px]">
              <select aria-label="Match by" className="block h-[21px] w-full appearance-none overflow-hidden border border-[#adadad] bg-[#e1e1e1] pl-[3px] pr-[23px]">
                <option>Name</option>
              </select>
              <Chevron />
            </div>
          </div>
          <div className="mt-px flex items-start">
            <label htmlFor="find-name" className="w-3.5 leading-5">&gt;</label>
            <input id="find-name" className="h-[22px] w-[108px] border border-[#777] bg-white px-1 shadow-[inset_0_0_0_1px_#fff,inset_2px_2px_0_#666]" />
            <button className="ml-[5px] mt-[3px] h-5 w-12 border border-[#adadad] bg-[#e1e1e1]">More...</button>
          </div>
        </fieldset>
      </section>
    </aside>
  );
}

/* ---------- design canvas ---------- */

const cell = "border border-[#6a9a3a] p-0 pt-1 text-center font-normal leading-none";

function Canvas() {
  return (
    <main className="relative min-w-0 flex-1 overflow-hidden bg-black">
      <svg className="absolute left-[418px] top-[280px]" width="64" height="426" viewBox="0 0 64 426" fill="none">
        <rect x="1.500" y="3.500" width="60" height="420" stroke="#b4b4b4" />
        <path d="M0 3.500h4M1.500 1v4" stroke="#6a9a3a" />
        <rect x="5.500" y="8.500" width="51" height="409" fill="#4ea312" stroke="#29f529" />
        <path d="M6.500 9.500v410h49V9" stroke="#c8fb14" />
        <path d="M6.500 419.500h49" stroke="#f6fb14" />
        {[33, 181, 393].map((y) => (
          <g key={y}>
            <circle cx="32" cy={y} r="23.500" fill="#42de22" />
            <path d={`M19 ${y + 15}l13-30 12 30M24 ${y + 6}h16`} stroke="#57ec3a" strokeWidth="0.700" />
            <path d={`M24 ${y - 1}h16M25 ${y + 1}h14`} stroke="#b2f5a6" strokeDasharray="2 1 1 1 3 2" />
          </g>
        ))}
        <text transform="translate(42 273) rotate(-90)" fontFamily="Liberation Sans" fontSize="34" fill="#3dfc1c" fillOpacity="0.850">N00066</text>
      </svg>
      <table className="absolute left-[485px] top-[283px] w-[757px] table-fixed border-collapse font-['Liberation_Mono',monospace] text-[31px] text-[#6fa33c] [-webkit-text-stroke:1px_black]">
        <colgroup><col className="w-[137px]" /><col className="w-[307px]" /><col className="w-[194px]" /><col /></colgroup>
        <thead>
          <tr className="h-[39px]"><th colSpan={4} className={cell}>DRILL CHART: TOP to BOTTOM</th></tr>
          <tr className="h-[38px]"><th colSpan={4} className={cell}>ALL UNITS ARE IN MILLIMETERS</th></tr>
          <tr className="h-[38px]">
            <th className={cell}>FIGURE</th>
            <th className={cell}>FINISHED<span className="[-webkit-text-stroke:0px]">_</span>SIZE</th>
            <th className={cell}>PLATED</th>
            <th className={cell}>QTY</th>
          </tr>
        </thead>
        <tbody>
          <tr className="h-[45px]">
            <td className={cell}>
              <svg className="mx-auto" width="26" height="31" viewBox="0 0 26 31" fill="none" stroke="#6a9a3a"><path d="M.5 30.500L13 .5l12.500 30M5 20.500h16" /></svg>
            </td>
            <td className={cell}>5.0</td><td className={cell}>PLATED</td><td className={cell}>3</td>
          </tr>
        </tbody>
      </table>
    </main>
  );
}

/* ---------- status bar ---------- */

function Status() {
  const c = "flex items-center border-r border-[#d4d4d4]";
  return (
    <footer className="mt-0.5 grid h-[29px] shrink-0 grid-cols-[repeat(5,minmax(0,1fr))_34px_34px_repeat(6,minmax(0,1fr))] text-[13px]">
      <div className={c + " pl-0.5"}>Idle</div>
      <div className={c + " pl-1 pr-0.5 pt-px"}><div className="h-full w-full bg-[#00ff00]" /></div>
      <div className={c} />
      <div className={c + " pl-1"}>Top</div>
      <div className={c + " pl-1"}>102.300, 26.600</div>
      <div className="flex items-center justify-center border-r border-[#d4d4d4]"><button className="h-[26px] w-[26px] border border-[#adadad] bg-[#e1e1e1]">P</button></div>
      <div className="flex items-center justify-center border-r border-[#d4d4d4]"><button className="h-[26px] w-[26px] border border-[#adadad] bg-[#e1e1e1]">A</button></div>
      <div className={c} />
      <div className={c} />
      <div className={c + " pl-1"}>RF edit</div>
      <div className={c + " pl-1"}>Off</div>
      <div className={c + " pl-1 pr-px pt-px"}><div className="flex h-full w-full items-center bg-[#00ff00]">DRC</div></div>
      <div className="flex items-center pl-1">0</div>
    </footer>
  );
}

export default function App() {
  return (
    <div className="flex h-screen flex-col bg-[#efefef] font-['Open_Sans',sans-serif] text-black">
      <Defs />
      <header className="relative shrink-0 border-b-3 border-[#cc0000] bg-white">
        <div className="flex h-[29px] items-center pl-0.5 text-[14px]">
          <svg viewBox="0 0 20 20" className="mr-[5px] h-5 w-5" fill="none">
            <path d="M2 3h4l4 5 5-4M3 9l5 4 5 4h4M3 15h6M2 9l8-2" stroke="#12c930" strokeWidth="1.800" />
            <g fill="#12d930"><circle cx="3" cy="3" r="2.200" /><circle cx="3" cy="9" r="1.800" /><circle cx="4" cy="15" r="2.200" /><circle cx="16" cy="17" r="2.200" /></g>
            <path d="M2 14L11 6l7-3-3 5-3 7M4 13l5-1 8-3M9 13l6-9" stroke="#e3202a" strokeWidth="2" />
          </svg>
          <h1 className="whitespace-pre">OrCAD PCB Designer Professional: STEM.brd  Project: D:.../FLOWER/stem</h1>
          <div className="ml-auto flex items-center gap-[47px] pr-[26px]">
            <button aria-label="Minimize window" className="flex h-3 w-3 items-center"><span className="h-px w-full bg-black" /></button>
            <button aria-label="Restore window">
              <svg viewBox="0 0 12 12" className="h-3 w-3" fill="none" stroke="#000"><path d="M.5 2.500h9v9h-9zM2.500 2.500v-2h9v9h-2" /></svg>
            </button>
            <button aria-label="Close window">
              <svg viewBox="0 0 12 12" className="h-3 w-3" stroke="#000"><path d="M.5.5l11 11M11.500.5l-11 11" /></svg>
            </button>
          </div>
        </div>
        <nav className="flex h-[25px] items-center gap-[18px] pl-2 text-[14px]">
          {menus.map(([a, u, b]) => (
            <button key={a + u + b} className="leading-5">{a}<span className="underline underline-offset-2">{u}</span>{b}</button>
          ))}
        </nav>
        <div className="absolute right-0 top-6 font-['Noto_Sans',sans-serif] text-[18px] font-semibold leading-6 text-[#333]">
          cādence
          <span className="absolute left-[11px] top-[5px] h-0.5 w-1.5 bg-[#e03030]" />
        </div>
      </header>
      <ToolRow groups={rowOne} />
      <ToolRow groups={rowTwo} />
      <div className="flex min-h-0 flex-1">
        <div className="flex w-[35px] shrink-0 flex-col border-b border-r border-[#b8b8b8]">
          {leftBar.map((g, gi) => (
            <div key={gi} className={gi < 2 ? "border-b border-[#b8b8b8]" : ""}>
              <div className="mx-1 h-[13px] pt-1"><div className="border-t-2 border-dotted border-[#b4b4b4]" /></div>
              {g.map((n) => (
                <button key={n} aria-label={n} className="flex h-[30px] w-full items-center justify-center">{I[n]}</button>
              ))}
            </div>
          ))}
        </div>
        <div className="flex min-w-0 flex-1 gap-4 pl-[11px]">
          <div className="flex min-w-0 flex-1 pb-[11px] pt-[11px]"><Canvas /></div>
          <Docks />
        </div>
      </div>
      <Status />
      <div className="h-0.5 shrink-0 bg-[#464848]" />
    </div>
  );
}
